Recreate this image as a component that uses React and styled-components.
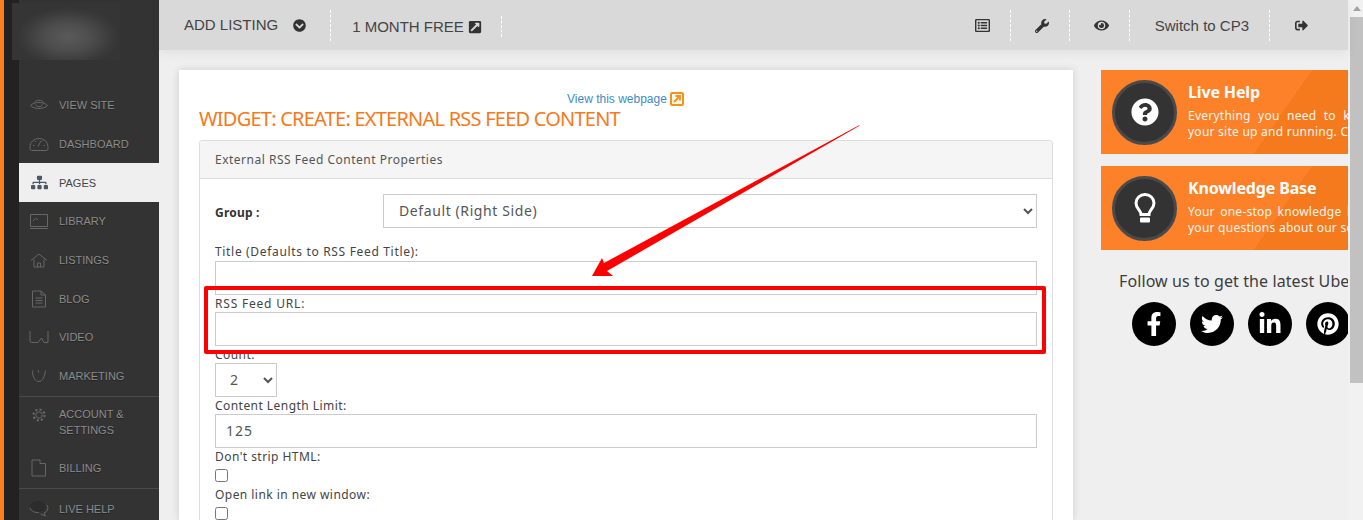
import React from 'react';
import styled, { createGlobalStyle } from 'styled-components';
import {
  FaChevronCircleDown,
  FaExternalLinkSquareAlt,
  FaRegListAlt,
  FaWrench,
  FaEye,
  FaSignOutAlt,
  FaSitemap,
  FaQuestionCircle,
  FaFacebookF,
  FaTwitter,
  FaLinkedinIn,
  FaPinterest,
} from 'react-icons/fa';

const GlobalStyle = createGlobalStyle`
  html, body {
    margin: 0;
    padding: 0;
    height: 520px;
    overflow: hidden;
    background: #efefef;
    font-family: "Noto Sans", sans-serif;
  }
  * { box-sizing: border-box; }
`;

const Page = styled.div`
  position: relative;
  display: flex;
  width: 1363px;
  height: 520px;
  overflow: hidden;
`;

/* left rail */
const OrangeStrip = styled.div`
  width: 4px;
  background: #fd7e1c;
`;

const DarkStrip = styled.div`
  width: 15px;
  background: #222;
`;

const Sidebar = styled.nav`
  width: 140px;
  padding-top: 86px;
  background: #333;
`;

const BlurLogo = styled.div`
  position: absolute;
  left: 12px;
  top: 3px;
  width: 108px;
  height: 57px;
  background: radial-gradient(ellipse 52px 30px at 56px 34px, #5a5a5a 0%, #4d4d4d 45%, #3a3a3a 85%, #353535 100%);
`;

const NavGroup = styled.div`
  border-top: ${(p) => (p.$line ? '1px solid #4a4a4a' : 'none')};
`;

const NavItem = styled.a`
  display: flex;
  align-items: ${(p) => (p.$tall ? 'flex-start' : 'center')};
  gap: 10px;
  height: ${(p) => p.$h || 38.7}px;
  padding: ${(p) => (p.$tall ? '9px 0 0 10px' : '0 0 0 10px')};
  background: ${(p) => (p.$active ? '#efefef' : 'transparent')};
  color: ${(p) => (p.$active ? '#444' : '#8b8b8b')};
  font: 11px/16px "Liberation Sans", Arial, sans-serif;
  text-shadow: ${(p) => (p.$active ? 'none' : '0 1px 0 #222')};
`;

const NavIcon = styled.span`
  display: flex;
  flex: none;
  align-items: center;
  justify-content: center;
  width: 20px;
  height: 18px;
  color: ${(p) => (p.$active ? '#4b5962' : '#666')};
  font-size: 17px;
`;

const Line = ({ children, w = 20, h = 18 }) => (
  <svg width={w} height={h} viewBox="0 0 20 18" fill="none" stroke="currentColor" strokeWidth="1">
    {children}
  </svg>
);

const icons = {
  eye: (
    <Line>
      <path d="M1.5 9.5C5 5.5 15 5.5 18.5 9.5C15 13.5 5 13.5 1.5 9.5Z" />
      <path d="M5.5 6.5C7 3.5 13 3.5 14.5 6.5" />
      <path d="M6.5 8.5C7.5 11.5 12.5 11.5 13.5 8.5" />
    </Line>
  ),
  gauge: (
    <Line>
      <path d="M2.5 15.5H17.5Q19 15.5 19 13.5V11.5A9 8 0 0 0 1 11.5V13.5Q1 15.5 2.5 15.5Z" />
      <path d="M9 11.5L12 6" />
      <path d="M4 10.5H5.5M14.5 10.5H16M6 6L7 7M13 6.5L14 5.5" />
    </Line>
  ),
  library: (
    <Line>
      <path d="M1.5 2.5H18.5V14.5H1.5Z" />
      <path d="M1 16.5H19" />
      <path d="M4 9L6.5 6.5L9 7.5" />
    </Line>
  ),
  home: (
    <Line>
      <path d="M2 9.5L10 3L18 9.5" />
      <path d="M5 8.5V16H15V8.5" />
      <path d="M8.5 16V12H11.5V16" />
    </Line>
  ),
  blog: (
    <Line>
      <path d="M3.5 1H12L16.5 5V17H3.5Z" />
      <path d="M12 1V5H16.5" />
      <path d="M6.5 8H13.5M6.5 10.5H13.5M6.5 13H13.5" />
    </Line>
  ),
  video: (
    <Line>
      <path d="M1 3V13Q1 14.5 2.5 14.5H9L12.5 10L15 14.5H19V3" />
    </Line>
  ),
  marketing: (
    <Line>
      <path d="M3.5 5C4 11 6.5 14.5 10 14.5C13.5 14.5 15.5 10 16.5 3.5" />
      <path d="M3 4H4.5M9.5 3.5V5.5" />
    </Line>
  ),
  gear: (
    <Line>
      <circle cx="10" cy="9" r="3.2" />
      <circle cx="10" cy="9" r="5.5" strokeWidth="2.2" strokeDasharray="2.1 2.2" />
    </Line>
  ),
  billing: (
    <Line>
      <path d="M3 1H11V4.5H16.5V17H3Z" />
    </Line>
  ),
  chat: (
    <Line>
      <ellipse cx="9" cy="6.5" rx="7.5" ry="5.5" fill="#2c2c2c" stroke="none" />
      <path d="M1 8C2 11 6 13 10 12.5" />
      <path d="M18 5C20 8.5 18 12 15 13L16.5 16L11.5 14" />
    </Line>
  ),
};

/* main column */
const Main = styled.div`
  display: flex;
  flex-direction: column;
  width: 1189px;
`;

const TopBar = styled.header`
  position: relative;
  z-index: 2;
  display: flex;
  flex: none;
  align-items: center;
  height: 50px;
  padding-right: 20px;
  background: #d9d9d9;
  box-shadow: 0 4px 10px rgba(0, 0, 0, 0.06);
  color: #444;
  font: 15px "Liberation Sans", Arial, sans-serif;
`;

const TopItem = styled.div`
  display: flex;
  align-items: center;
  height: ${(p) => (p.$short ? 21 : 31)}px;
  margin-top: ${(p) => (p.$short ? 3 : 1)}px;
  padding: ${(p) => p.$pad || '0 20px 0 25px'};
  border-right: ${(p) => (p.$last ? 'none' : '1px dashed #fff')};
  white-space: nowrap;
`;

const RaisedLabel = styled.span`
  margin-bottom: 2px;
`;

const RightItems = styled.div`
  display: flex;
  align-items: center;
  margin-left: auto;
`;

const TopIcon = styled.span`
  display: flex;
  margin-left: ${(p) => p.$gap || 0}px;
  color: #333;
  font-size: ${(p) => p.$size || 14}px;
`;

const Content = styled.div`
  display: flex;
  flex: 1;
  gap: 28px;
  min-height: 0;
  padding: 20px 0 0 20px;
`;

const Card = styled.section`
  flex: none;
  width: 894px;
  padding: 20px 20px 0;
  background: #fff;
  box-shadow: 0 0 8px rgba(0, 0, 0, 0.14);
`;

const ViewLink = styled.a`
  display: flex;
  align-items: center;
  gap: 3px;
  height: 18px;
  padding-left: 368px;
  color: #428bca;
  font: 12px "Liberation Sans", Arial, sans-serif;
`;

const Heading = styled.h1`
  margin: 0 0 11px;
  color: #f47a20;
  font: 400 20px/21px "Noto Sans", sans-serif;
  letter-spacing: -0.77px;
  text-transform: uppercase;
  white-space: nowrap;
`;

const Panel = styled.div`
  border: 1px solid #ddd;
  border-bottom: none;
  border-radius: 4px 4px 0 0;
  color: #444;
  font: 12px/17.14px "Noto Sans", sans-serif;
  letter-spacing: 0.5px;
`;

const PanelHead = styled.div`
  height: 38px;
  padding: 10px 15px;
  border-bottom: 1px solid #ddd;
  border-radius: 4px 4px 0 0;
  background: #f5f5f5;
  color: #555;
`;

const PanelBody = styled.div`
  padding: 15px 15px 0;
`;

const GroupRow = styled.div`
  display: flex;
  align-items: center;
  height: 34px;
  margin-bottom: 15.4px;
`;

const GroupLabel = styled.label`
  flex: none;
  width: 168px;
  padding-top: 3px;
  color: #333;
  font-weight: 700;
  letter-spacing: 0.2px;
`;

const FieldLabel = styled.label`
  display: block;
  letter-spacing: ${(p) => p.$ls || 0.45}px;
`;

const TextInput = styled.input`
  display: block;
  width: 100%;
  height: 34px;
  padding: 6px 10px;
  border: 1px solid #ccc;
  background: #fff;
  color: #555;
  font: 14px "Noto Sans", sans-serif;
  letter-spacing: 1px;
  outline: none;
`;

const Select = styled.select`
  display: block;
  flex: ${(p) => (p.$small ? 'none' : 1)};
  width: ${(p) => (p.$small ? '62px' : 'auto')};
  height: 34px;
  padding: ${(p) => (p.$small ? '5px 10px 7px' : '5px 11px 7px')};
  border: 1px solid #ccc;
  border-radius: 0;
  background: #fff;
  color: #555;
  font: 14px "Noto Sans", sans-serif;
  letter-spacing: 0.6px;
  outline: none;
`;

const Check = styled.input`
  display: block;
  width: 13px;
  height: 13px;
  margin: 4px 0 3.6px;
`;

/* right column */
const Aside = styled.aside`
  flex: 1;
  min-width: 0;
  overflow: hidden;
`;

const Promo = styled.a`
  display: flex;
  align-items: center;
  gap: 11px;
  height: 84px;
  margin-bottom: 12px;
  padding-left: 11px;
  background: linear-gradient(125deg, #fd8128 173px, #f57a1d 173px);
  color: #fff;
  font-family: "Noto Sans", sans-serif;
  overflow: hidden;
`;

const PromoBadge = styled.span`
  display: flex;
  flex: none;
  align-items: center;
  justify-content: center;
  width: 65px;
  height: 65px;
  border: 3px solid #4a4a4a;
  border-radius: 50%;
  background: #333;
  color: #fff;
  font-size: ${(p) => p.$size || 28}px;
`;

const PromoText = styled.div`
  padding-bottom: 2px;
  white-space: nowrap;
`;

const PromoTitle = styled.div`
  margin-bottom: 6px;
  font-size: 16px;
  font-weight: 700;
  line-height: 19px;
  letter-spacing: -0.15px;
`;

const PromoLine = styled.div`
  font-size: 12px;
  line-height: 16px;
  letter-spacing: 0.25px;
  word-spacing: ${(p) => p.$spread || 0}px;
  opacity: 0.92;
`;

const FollowText = styled.div`
  margin: 21px 0 11px 18px;
  color: #3d3d3d;
  font: 16px/20px "Noto Sans", sans-serif;
  letter-spacing: 0.1px;
  white-space: nowrap;
`;

const SocialRow = styled.div`
  display: flex;
  gap: 14px;
  padding-left: 31px;
`;

const SocialDot = styled.a`
  display: flex;
  flex: none;
  align-items: center;
  justify-content: center;
  width: 44px;
  height: 44px;
  border-radius: 50%;
  background: #000;
  color: #fff;
  font-size: ${(p) => p.$size || 22}px;
`;

/* browser scrollbar */
const ScrollTrack = styled.div`
  display: flex;
  flex-direction: column;
  align-items: flex-end;
  width: 15px;
  background: #f1f1f1;
`;

const ScrollArrow = styled.div`
  align-self: center;
  width: 0;
  height: 0;
  margin: 6px 0 6px 2px;
  border-right: 4px solid transparent;
  border-bottom: 5px solid #a3a3a3;
  border-left: 4px solid transparent;
`;

const ScrollThumb = styled.div`
  width: 13px;
  height: 366px;
  background: #c1c1c1;
`;

/* annotations drawn on top of the screenshot */
const RedBox = styled.div`
  position: absolute;
  left: 204px;
  top: 286px;
  width: 842px;
  height: 68px;
  border: 4px solid #f00;
  border-radius: 2px;
`;

const ArrowLayer = styled.svg`
  position: absolute;
  left: 0;
  top: 0;
  pointer-events: none;
`;

const navTop = [
  { key: 'eye', label: 'VIEW SITE' },
  { key: 'gauge', label: 'DASHBOARD' },
  { key: 'pages', label: 'PAGES', active: true },
  { key: 'library', label: 'LIBRARY' },
  { key: 'home', label: 'LISTINGS' },
  { key: 'blog', label: 'BLOG' },
  { key: 'video', label: 'VIDEO' },
  { key: 'marketing', label: 'MARKETING' },
];

const App = () => {
  return (
    <Page>
      <GlobalStyle />
      <OrangeStrip />
      <DarkStrip />
      <Sidebar>
        <NavGroup>
          {navTop.map((item) => (
            <NavItem key={item.key} $active={item.active}>
              <NavIcon $active={item.active}>
                {item.key === 'pages' ? <FaSitemap /> : icons[item.key]}
              </NavIcon>
              {item.label}
            </NavItem>
          ))}
        </NavGroup>
        <NavGroup $line>
          <NavItem $tall $h={51}>
            <NavIcon>{icons.gear}</NavIcon>
            <span>
              ACCOUNT &amp;
              <br />
              SETTINGS
            </span>
          </NavItem>
          <NavItem $h={40.5}>
            <NavIcon>{icons.billing}</NavIcon>
            BILLING
          </NavItem>
        </NavGroup>
        <NavGroup $line>
          <NavItem $h={40}>
            <NavIcon>{icons.chat}</NavIcon>
            LIVE HELP
          </NavItem>
        </NavGroup>
      </Sidebar>
      <BlurLogo />

      <Main>
        <TopBar>
          <TopItem $pad="0 24px 0 25px">
            <RaisedLabel>ADD LISTING</RaisedLabel>
            <TopIcon $gap={15} $size={13}>
              <FaChevronCircleDown />
            </TopIcon>
          </TopItem>
          <TopItem $short $pad="0 19px 0 21px">
            1 MONTH FREE
            <TopIcon $gap={4}>
              <FaExternalLinkSquareAlt />
            </TopIcon>
          </TopItem>
          <RightItems>
            <TopItem $pad="0 20px 0 24px">
              <TopIcon $size={15}>
                <FaRegListAlt />
              </TopIcon>
            </TopItem>
            <TopItem $pad="0 20px 0 24px">
              <TopIcon>
                <FaWrench />
              </TopIcon>
            </TopItem>
            <TopItem $pad="0 20px 0 24px">
              <TopIcon $size={15}>
                <FaEye />
              </TopIcon>
            </TopItem>
            <TopItem>Switch to CP3</TopItem>
            <TopItem $last>
              <TopIcon $size={13}>
                <FaSignOutAlt />
              </TopIcon>
            </TopItem>
          </RightItems>
        </TopBar>

        <Content>
          <Card>
            <ViewLink>
              View this webpage
              <svg width="14" height="14" viewBox="0 0 14 14" fill="none">
                <rect x="1" y="1" width="12" height="12" rx="1" stroke="#f5921e" strokeWidth="2" fill="#fff6e5" />
                <path d="M4 10L9.5 4.5M5.5 4H10V8.5" stroke="#f5921e" strokeWidth="1.8" />
              </svg>
            </ViewLink>
            <Heading>Widget: Create: External RSS Feed Content</Heading>
            <Panel>
              <PanelHead>External RSS Feed Content Properties</PanelHead>
              <PanelBody>
                <GroupRow>
                  <GroupLabel>Group :</GroupLabel>
                  <Select defaultValue="right">
                    <option value="right">Default (Right Side)</option>
                  </Select>
                </GroupRow>
                <FieldLabel $ls={0.67}>Title (Defaults to RSS Feed Title):</FieldLabel>
                <TextInput />
                <FieldLabel $ls={0.8}>RSS Feed URL:</FieldLabel>
                <TextInput />
                <FieldLabel>Count:</FieldLabel>
                <Select $small defaultValue="2">
                  <option value="2">2</option>
                </Select>
                <FieldLabel>Content Length Limit:</FieldLabel>
                <TextInput defaultValue="125" />
                <FieldLabel>Don't strip HTML:</FieldLabel>
                <Check type="checkbox" />
                <FieldLabel>Open link in new window:</FieldLabel>
                <Check type="checkbox" />
              </PanelBody>
            </Panel>
          </Card>

          <Aside>
            <Promo>
              <PromoBadge>
                <FaQuestionCircle />
              </PromoBadge>
              <PromoText>
                <PromoTitle>Live Help</PromoTitle>
                <PromoLine $spread={4}>Everything you need to know to get</PromoLine>
                <PromoLine>your site up and running. Click here</PromoLine>
              </PromoText>
            </Promo>
            <Promo>
              <PromoBadge>
                <svg width="22" height="30" viewBox="0 0 22 30" fill="none">
                  <path d="M7 21.5C7 17.5 2 15.5 2 10A9 8.5 0 0 1 20 10C20 15.5 15 17.5 15 21.5Z" stroke="#fff" strokeWidth="3" />
                  <rect x="6" y="24.5" width="10" height="5" rx="1" fill="#fff" />
                </svg>
              </PromoBadge>
              <PromoText>
                <PromoTitle>Knowledge Base</PromoTitle>
                <PromoLine $spread={2}>Your one-stop knowledge base for</PromoLine>
                <PromoLine>your questions about our software</PromoLine>
              </PromoText>
            </Promo>
            <FollowText>Follow us to get the latest Uber news</FollowText>
            <SocialRow>
              <SocialDot $size={24}>
                <FaFacebookF />
              </SocialDot>
              <SocialDot>
                <FaTwitter />
              </SocialDot>
              <SocialDot $size={24}>
                <FaLinkedinIn />
              </SocialDot>
              <SocialDot>
                <FaPinterest />
              </SocialDot>
            </SocialRow>
          </Aside>
        </Content>
      </Main>

      <ScrollTrack>
        <ScrollArrow />
        <ScrollThumb />
      </ScrollTrack>

      <RedBox />
      <ArrowLayer width="1363" height="520" viewBox="0 0 1363 520">
        <path d="M859.5 125L604 263L602 258L592 276L613 276L607 271L859.5 125.8Z" fill="#f00" />
      </ArrowLayer>
    </Page>
  );
};

export default App;
